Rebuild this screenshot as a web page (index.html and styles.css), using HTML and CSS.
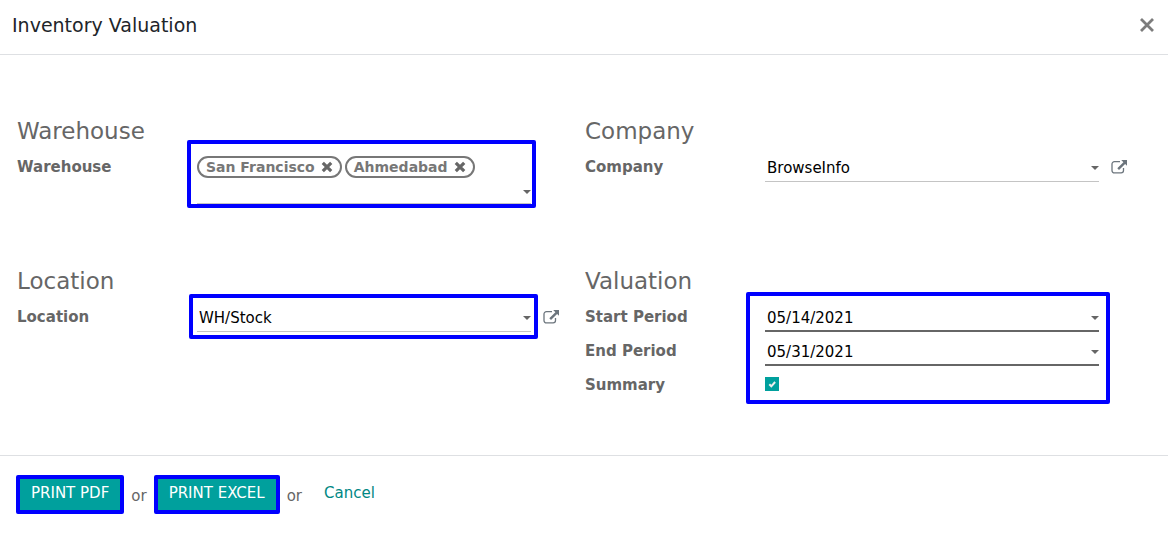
FILE: index.html
```html
<!DOCTYPE html>
<html lang="en">
<head>
<meta charset="utf-8">
<title>Inventory Valuation</title>
<meta name="viewport" content="width=device-width, initial-scale=1">
<link rel="stylesheet" href="styles.css">
</head>
<body>
<svg class="sprite" aria-hidden="true">
  <symbol id="external" viewBox="0 0 16 16">
    <path d="M9 2.7H3.4A2.4 2.4 0 0 0 1 5.1v6.4a2.4 2.4 0 0 0 2.4 2.4h6.7a2.4 2.4 0 0 0 2.4-2.4V9" fill="none" stroke="currentColor" stroke-width="1.3"/>
    <path d="M10.2 1H16v5.8l-1.9-1.9-6.1 6-1.7-1.7 6.1-6z" fill="currentColor"/>
  </symbol>
  <symbol id="times" viewBox="0 0 12 12">
    <path d="M1.8 1.8l8.4 8.4M10.2 1.8l-8.4 8.4" fill="none" stroke="currentColor" stroke-width="3.2"/>
  </symbol>
</svg>
<form class="dialog">
  <header class="dialog-header">
    <h1 class="dialog-title">Inventory Valuation</h1>
    <button class="close" type="button" aria-label="Close"><svg class="close-icon" viewBox="0 0 14 14"><path d="M1 1l12 12M13 1L1 13" fill="none" stroke="currentColor" stroke-width="2.8"/></svg></button>
  </header>
  <main class="dialog-body">
    <section class="group">
      <h2 class="group-title">Warehouse</h2>
      <div class="field">
        <label class="label" for="warehouse">Warehouse</label>
        <div class="control tags marked marked-tags">
          <div class="tag-list">
            <span class="tag">San Francisco<button class="tag-remove" type="button" aria-label="Remove San Francisco"><svg class="tag-icon"><use href="#times"/></svg></button></span>
            <span class="tag">Ahmedabad<button class="tag-remove" type="button" aria-label="Remove Ahmedabad"><svg class="tag-icon"><use href="#times"/></svg></button></span>
          </div>
          <div class="picker"><input class="input input-short" id="warehouse" type="text"></div>
        </div>
      </div>
    </section>
    <section class="group">
      <h2 class="group-title">Company</h2>
      <div class="field">
        <label class="label" for="company">Company</label>
        <div class="control picker"><select class="input" id="company"><option>BrowseInfo</option></select></div>
        <button class="external" type="button" aria-label="Open company"><svg class="external-icon"><use href="#external"/></svg></button>
      </div>
    </section>
    <section class="group">
      <h2 class="group-title">Location</h2>
      <div class="field">
        <label class="label" for="location">Location</label>
        <div class="control picker marked marked-select"><select class="input" id="location"><option>WH/Stock</option></select></div>
        <button class="external" type="button" aria-label="Open location"><svg class="external-icon"><use href="#external"/></svg></button>
      </div>
    </section>
    <section class="group">
      <h2 class="group-title">Valuation</h2>
      <div class="period">
        <div class="period-labels">
          <label class="label" for="start">Start Period</label>
          <label class="label" for="end">End Period</label>
          <label class="label" for="summary">Summary</label>
        </div>
        <div class="period-controls marked marked-period">
          <div class="picker"><input class="input input-required" id="start" type="text" value="05/14/2021"></div>
          <div class="picker"><input class="input input-required" id="end" type="text" value="05/31/2021"></div>
          <div class="check-row"><input class="checkbox" id="summary" type="checkbox" checked></div>
        </div>
      </div>
    </section>
  </main>
  <footer class="dialog-footer">
    <button class="button" type="button">PRINT PDF</button>
    <span class="or">or</span>
    <button class="button" type="button">PRINT EXCEL</button>
    <span class="or">or</span>
    <button class="cancel" type="button">Cancel</button>
  </footer>
</form>
</body>
</html>
```
FILE: styles.css
```css
* { box-sizing: border-box; }

body {
  margin: 0;
  background: #fff;
  color: #666;
  font: 15px/22px "DejaVu Sans", Verdana, sans-serif;
}

button, input, select { font: inherit; }
button { cursor: pointer; }

.sprite { display: none; }

.dialog-header {
  display: flex;
  align-items: center;
  justify-content: space-between;
  padding: 12px 14px 16px 12px;
  border-bottom: 1px solid #dee0e3;
}

.dialog-title {
  margin: 0;
  color: #212529;
  font-size: 19px;
  font-weight: 400;
  line-height: 26px;
}

.close {
  display: flex;
  padding: 0;
  border: 0;
  background: none;
  color: #7c7c7c;
}

.close-icon { width: 14px; height: 14px; }

.dialog-body {
  display: grid;
  grid-template-columns: 1fr 1fr;
  grid-template-rows: 150px auto;
  padding: 62px 15px 53px 17px;
}

.group { padding-right: 26px; }

.group-title {
  margin: 0 0 6px;
  font-size: 23px;
  font-weight: 400;
  line-height: 28px;
}

.field {
  display: flex;
  align-items: flex-start;
}

.label {
  flex: 0 0 180px;
  font-weight: 700;
  line-height: 33px;
}

.control { flex: 1; min-width: 0; }
.tags { margin-right: 28px; }

.picker { position: relative; }

.picker::after {
  content: "";
  position: absolute;
  top: 15px;
  right: 0;
  border: 4px solid transparent;
  border-top-color: #666;
  border-bottom: 0;
}

.input {
  display: block;
  width: 100%;
  height: 31px;
  padding: 4px 20px 0 2px;
  border: 0;
  border-bottom: 1px solid #c4c4c4;
  border-radius: 0;
  outline: 0;
  background: transparent;
  color: #000;
  appearance: none;
}

.input-required { border-bottom: 2px solid #666; }
.input-short { height: 26px; }
.tags .picker::after { top: 12px; }

.tag-list {
  display: flex;
  flex-wrap: wrap;
  gap: 3px;
  padding-top: 5px;
}

.tag {
  display: flex;
  align-items: center;
  gap: 6px;
  padding: 0 7px;
  border: 2px solid #777;
  border-radius: 11px;
  color: #777;
  font-size: 14px;
  font-weight: 700;
  line-height: 18px;
}

.tag-remove {
  display: flex;
  padding: 0;
  border: 0;
  background: none;
  color: #666;
}

.tag-icon { width: 12px; height: 12px; }

.external {
  display: flex;
  margin: 8px 0 0 12px;
  padding: 0;
  border: 0;
  background: none;
  color: #6c757d;
}

.external-icon { width: 16px; height: 16px; }

.period {
  display: flex;
  align-items: flex-start;
}

.period-labels {
  display: flex;
  flex: 0 0 180px;
  flex-direction: column;
  gap: 1px;
}

.period-labels .label { flex: none; }

.period-controls {
  display: flex;
  flex: 1;
  flex-direction: column;
  gap: 3px;
  margin-right: 28px;
}

.check-row { padding: 8px 0; }

.checkbox {
  display: block;
  width: 14px;
  height: 14px;
  margin: 0;
  background: #00a09d url("data:image/svg+xml,%3Csvg xmlns='http://www.w3.org/2000/svg' viewBox='0 0 14 14'%3E%3Cpath d='M4.3 7.3l2 2 3.8-4.3' fill='none' stroke='%23eee' stroke-width='2'/%3E%3C/svg%3E") center / 14px no-repeat;
  appearance: none;
}

/* Blue highlight frames drawn over the fields */
.marked { position: relative; }

.marked::before {
  content: "";
  position: absolute;
  border: 4px solid #00f;
  border-radius: 2px;
  pointer-events: none;
}

.marked-tags::before { inset: -11px -5px -4px -10px; }
.marked-select::before { inset: -7px -7px -7px -8px; }
.marked-period::before { inset: -9px -11px -5px -19px; }

.dialog-footer {
  display: flex;
  align-items: flex-start;
  padding: 19px 16px;
  border-top: 1px solid #dee0e3;
}

.button {
  height: 39px;
  padding: 0 11px 4px;
  border: 4px solid #00f;
  border-radius: 2px;
  background: #00a09d;
  color: #fff;
}

.or { margin: 10px 7px 0; }

.cancel {
  margin: 7px 0 0 15px;
  padding: 0;
  border: 0;
  background: none;
  color: #008784;
}
```
